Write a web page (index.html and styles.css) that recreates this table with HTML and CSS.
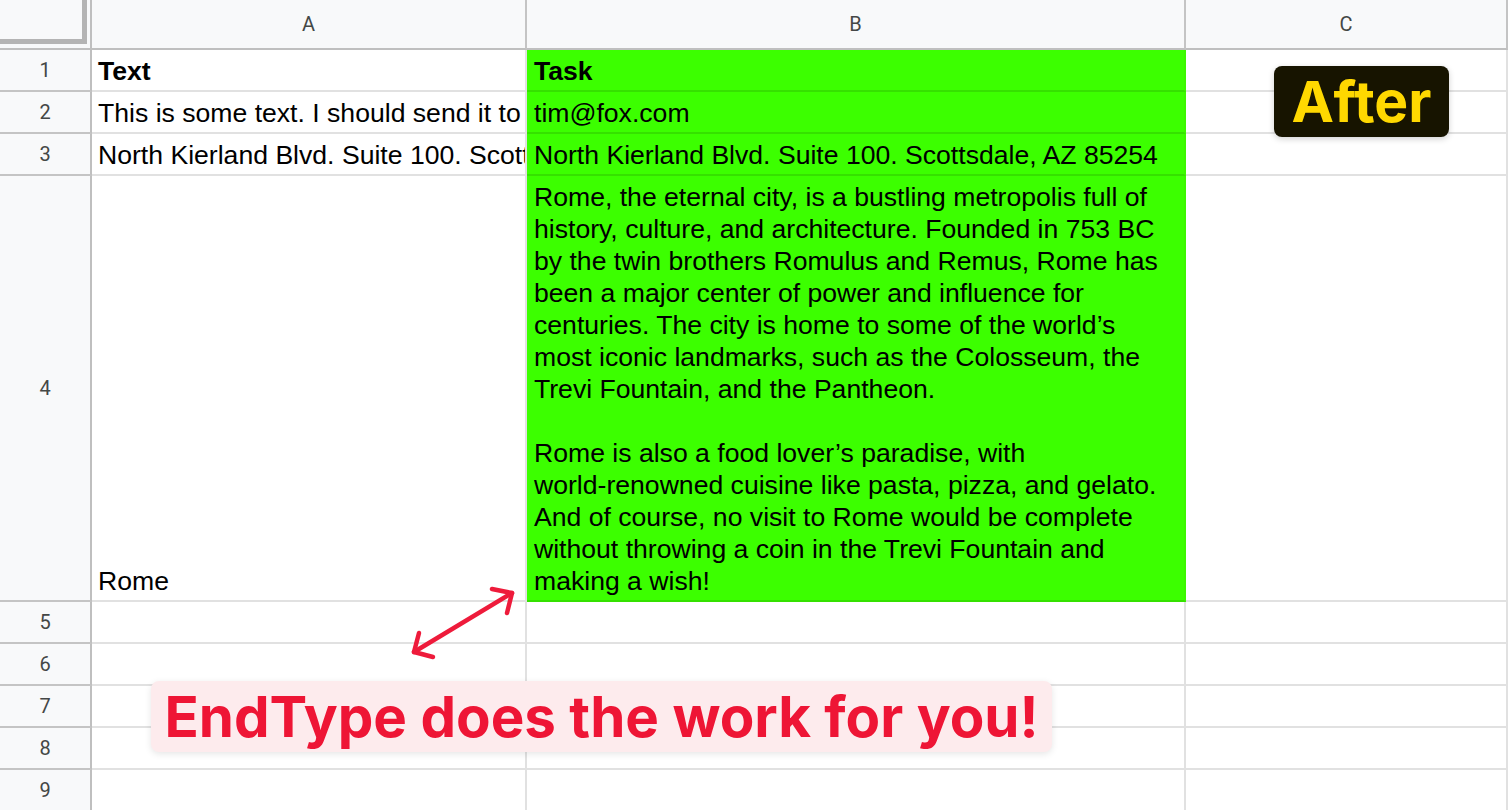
FILE: index.html
```html
<!DOCTYPE html>
<html lang="en">
<head>
<meta charset="utf-8">
<title>EndType - After</title>
<link rel="stylesheet" href="styles.css">
</head>
<body>
<div class="page">
  <div class="sheet">
    <div class="corner"><div class="freeze"></div></div>
    <div class="colhead">A</div>
    <div class="colhead">B</div>
    <div class="colhead">C</div>

    <div class="rowhead">1</div>
    <div class="cell bold">Text</div>
    <div class="cell green bold">Task</div>
    <div class="cell"></div>

    <div class="rowhead">2</div>
    <div class="cell">This is some text. I should send it to</div>
    <div class="cell green">tim@fox.com</div>
    <div class="cell"></div>

    <div class="rowhead">3</div>
    <div class="cell">North Kierland Blvd. Suite 100. Scott</div>
    <div class="cell green">North Kierland Blvd. Suite 100. Scottsdale, AZ 85254</div>
    <div class="cell"></div>

    <div class="rowhead">4</div>
    <div class="cell">Rome</div>
    <div class="cell green wrap"><p>Rome, the eternal city, is a bustling metropolis full of<br>history, culture, and architecture. Founded in 753 BC<br>by the twin brothers Romulus and Remus, Rome has<br>been a major center of power and influence for<br>centuries. The city is home to some of the world’s<br>most iconic landmarks, such as the Colosseum, the<br>Trevi Fountain, and the Pantheon.<br><br>Rome is also a food lover’s paradise, with<br>world-renowned cuisine like pasta, pizza, and gelato.<br>And of course, no visit to Rome would be complete<br>without throwing a coin in the Trevi Fountain and<br>making a wish!</p></div>
    <div class="cell"></div>

    <div class="rowhead">5</div><div class="cell"></div><div class="cell"></div><div class="cell"></div>
    <div class="rowhead">6</div><div class="cell"></div><div class="cell"></div><div class="cell"></div>
    <div class="rowhead">7</div><div class="cell"></div><div class="cell"></div><div class="cell"></div>
    <div class="rowhead">8</div><div class="cell"></div><div class="cell"></div><div class="cell"></div>
    <div class="rowhead">9</div><div class="cell"></div><div class="cell"></div><div class="cell"></div>
  </div>

  <div class="badge-after">After</div>

  <svg class="arrow" width="130" height="100" viewBox="0 0 130 100" aria-hidden="true">
    <g fill="none" stroke="#ee1b3b" stroke-width="4.5" stroke-linecap="round" stroke-linejoin="round">
      <path d="M112 18 L14 77"/>
      <path d="M92 14 L112 18 L107 38"/>
      <path d="M19 58 L14 77 L33 82"/>
    </g>
  </svg>

  <div class="banner">EndType does the work for you!</div>
</div>
</body>
</html>
```

FILE: styles.css
```css
html, body {
  margin: 0;
  padding: 0;
  background: #ffffff;
}

.page {
  position: relative;
  width: 1508px;
  height: 810px;
  overflow: hidden;
}

.sheet {
  display: grid;
  grid-template-columns: 92px 435px 659px 322px;
  grid-template-rows: 50px 42px 42px 42px 426px 42px 42px 42px 42px 42px;
  font-family: "Liberation Sans", Arial, sans-serif;
  font-size: 26.6px;
  line-height: 32px;
  color: #000;
}

.corner {
  box-sizing: border-box;
  background: #f8f9fa;
  border-right: 2px solid #bfbfbf;
  border-bottom: 2px solid #bfbfbf;
}

.freeze {
  width: 82px;
  height: 39px;
  border-right: 5px solid #b4b4b4;
  border-bottom: 5px solid #b4b4b4;
}

.colhead {
  box-sizing: border-box;
  background: #f8f9fa;
  border-right: 2px solid #c4c4c4;
  border-bottom: 2px solid #bfbfbf;
  display: flex;
  align-items: center;
  justify-content: center;
  font-family: Roboto, "Liberation Sans", sans-serif;
  font-size: 20px;
  color: #444746;
}

.rowhead {
  box-sizing: border-box;
  background: #f8f9fa;
  border-right: 2px solid #bfbfbf;
  border-bottom: 2px solid #c4c4c4;
  display: flex;
  align-items: center;
  justify-content: center;
  font-family: Roboto, "Liberation Sans", sans-serif;
  font-size: 20px;
  color: #444746;
}

.cell {
  box-sizing: border-box;
  border-right: 2px solid #e1e1e1;
  border-bottom: 2px solid #e1e1e1;
  padding: 0 0 3px 6px;
  display: flex;
  align-items: flex-end;
  white-space: nowrap;
  overflow: hidden;
}

.cell p {
  margin: 0;
}

.bold {
  font-weight: 700;
}

.green {
  background: #3cff00;
  border-right-color: #3cf700;
  border-bottom-color: #35e100;
  padding-left: 7px;
}

.badge-after {
  position: absolute;
  left: 1274px;
  top: 66px;
  width: 175px;
  height: 71px;
  box-sizing: border-box;
  border-radius: 8px;
  background: #171400;
  color: #ffd800;
  font-family: Inter, "Liberation Sans", sans-serif;
  font-weight: 700;
  font-size: 57px;
  line-height: 71px;
  text-align: center;
  box-shadow: 0 2px 6px rgba(0, 0, 0, 0.18);
}

.arrow {
  position: absolute;
  left: 400px;
  top: 575px;
}

.banner {
  position: absolute;
  left: 151px;
  top: 681px;
  width: 901px;
  height: 71px;
  box-sizing: border-box;
  border-radius: 8px;
  background: #fdebed;
  color: #ee1535;
  font-family: Inter, "Liberation Sans", sans-serif;
  font-weight: 700;
  font-size: 56.5px;
  line-height: 71px;
  text-align: center;
  white-space: nowrap;
  box-shadow: 0 2px 7px rgba(0, 0, 0, 0.10);
}
```
